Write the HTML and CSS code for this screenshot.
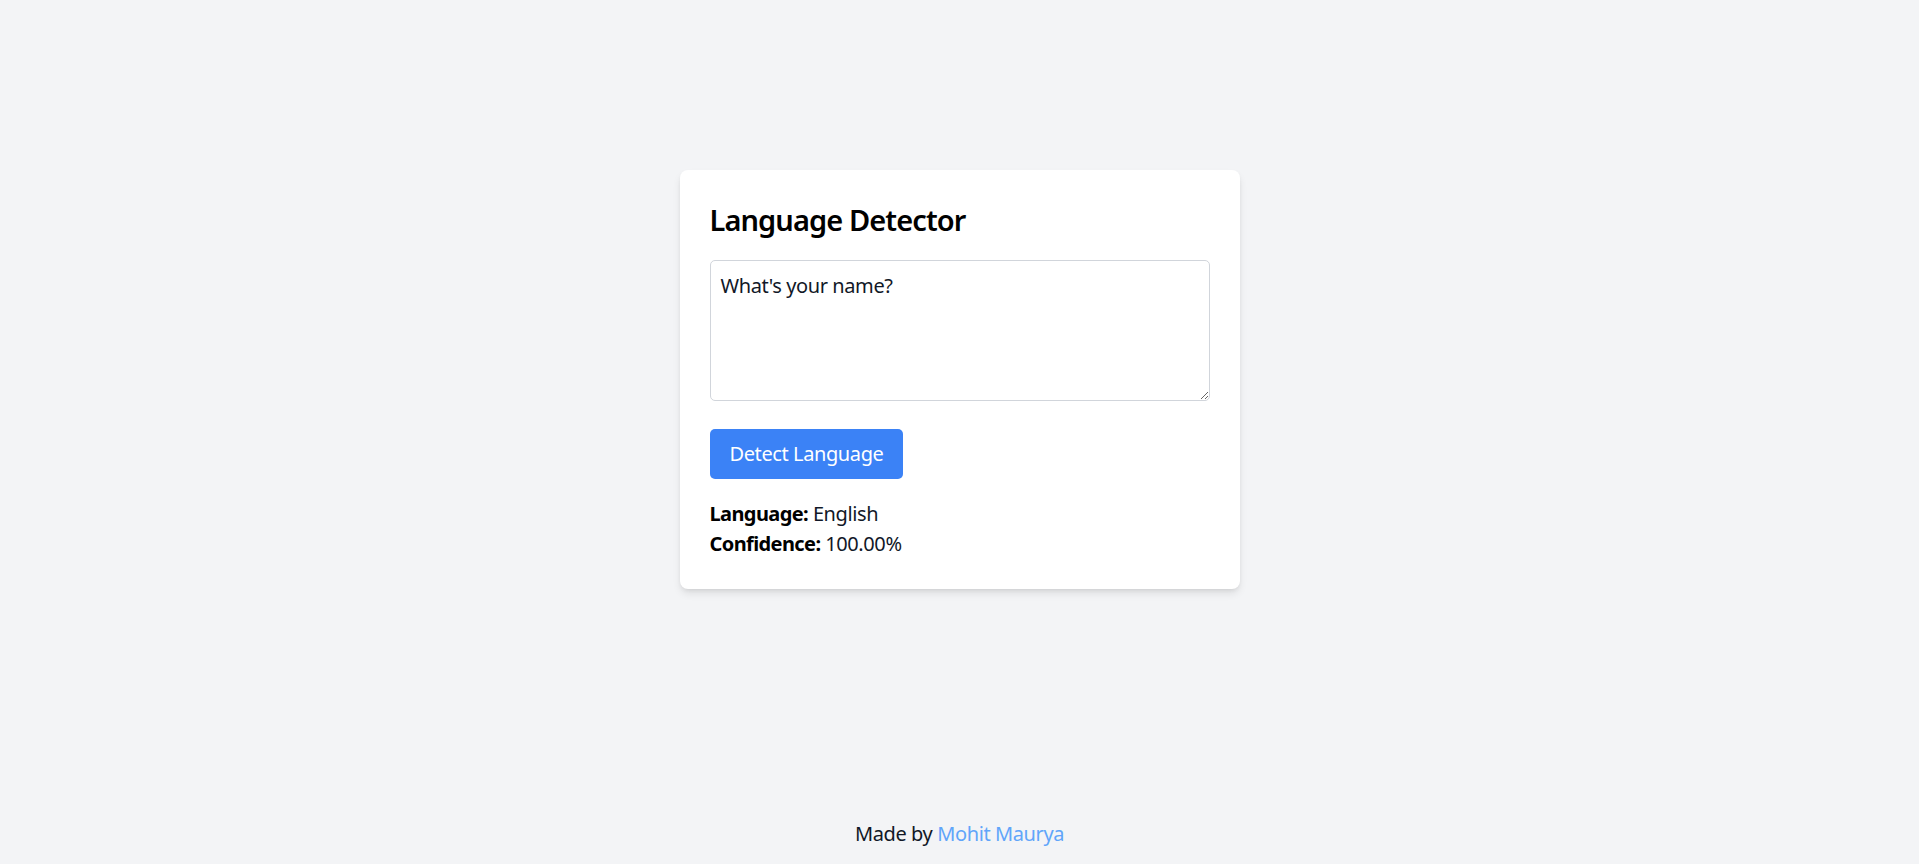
FILE: index.html
```html
<!DOCTYPE html>
<html lang="en">
<head>
<meta charset="utf-8">
<title>Language Detector</title>
<link rel="stylesheet" href="styles.css">
</head>
<body>
<div class="page">
  <main class="main">
    <div class="card">
      <h1 class="title">Language Detector</h1>
      <textarea class="input" rows="4">What's your name?</textarea>
      <button class="btn">Detect Language</button>
      <div class="result">
        <p class="line"><strong>Language:</strong> English</p>
        <p class="line"><strong>Confidence:</strong> 100.00%</p>
      </div>
    </div>
  </main>
  <footer class="footer">Made by <a class="link" href="#">Mohit Maurya</a></footer>
</div>
</body>
</html>
```

FILE: styles.css
```css
* { box-sizing: border-box; }
html, body { margin: 0; padding: 0; }
body {
  background: #f3f4f6;
  font-family: "Noto Sans", "Open Sans", sans-serif;
  color: #111827;
  font-size: 20px;
  line-height: 30px;
  letter-spacing: -0.4px;
}
.page {
  min-height: 864px;
  display: flex;
  flex-direction: column;
}
.main {
  flex: 1;
  display: flex;
  justify-content: center;
  align-items: flex-start;
  padding-top: 170px;
}
.card {
  width: 560px;
  background: #ffffff;
  border-radius: 8px;
  padding: 30px;
  box-shadow: 0 5px 8px -1px rgba(0,0,0,0.10), 0 2px 5px -2px rgba(0,0,0,0.10);
}
.title {
  margin: 0 0 20px 0;
  font-size: 29px;
  line-height: 40px;
  font-weight: 600;
  letter-spacing: -0.9px;
  color: #000;
}
.input {
  display: block;
  width: 100%;
  height: 141px;
  margin: 0 0 28px 0;
  padding: 10px;
  border: 1.25px solid #d1d5db;
  border-radius: 5px;
  font-family: inherit;
  font-size: 20px;
  line-height: 30px;
  letter-spacing: -0.4px;
  color: #111827;
  resize: vertical;
  background: #fff;
}
.btn {
  display: block;
  height: 50px;
  padding: 0 20px;
  background: #3b82f6;
  color: #fff;
  border: none;
  border-radius: 5px;
  font-family: inherit;
  font-size: 20px;
  line-height: 30px;
  letter-spacing: -0.4px;
  cursor: pointer;
}
.result { margin-top: 20px; }
.line { margin: 0; color: #111827; }
.line strong { color: #000; font-weight: 700; letter-spacing: -0.6px; }
.footer {
  text-align: center;
  padding: 0 0 15px 0;
  color: #111827;
}
.link { color: #60a5fa; text-decoration: none; }
```
